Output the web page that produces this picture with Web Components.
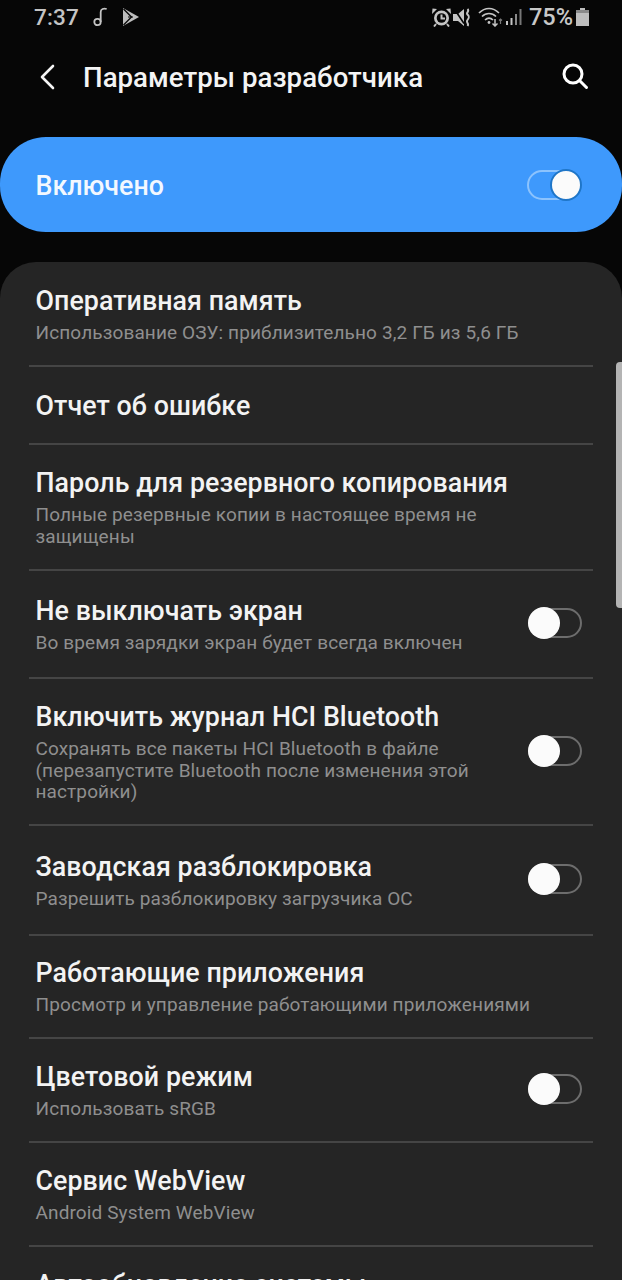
<!DOCTYPE html>
<html lang="ru"><head><meta charset="utf-8">
<style>
html,body{margin:0;padding:0;background:#060606;height:1280px;overflow:hidden}
body{font-family:Roboto,"Noto Sans",sans-serif}
</style></head><body>
<dev-status></dev-status>
<dev-appbar title="Параметры разработчика"></dev-appbar>
<dev-master label="Включено"></dev-master>
<dev-card>
<dev-row h="105" pt="24" title="Оперативная память" sub="Использование ОЗУ: приблизительно 3,2 ГБ из 5,6 ГБ"></dev-row>
<dev-row h="78" pt="24" title="Отчет об ошибке"></dev-row>
<dev-row h="126" pt="23" title="Пароль для резервного копирования" sub="Полные резервные копии в настоящее время не<br>защищены"></dev-row>
<dev-row h="108" pt="25" toggle title="Не выключать экран" sub="Во время зарядки экран будет всегда включен"></dev-row>
<dev-row h="147" pt="23" toggle title="Включить журнал HCI Bluetooth" sub="Сохранять все пакеты HCI Bluetooth в файле<br>(перезапустите Bluetooth после изменения этой<br>настройки)"></dev-row>
<dev-row h="110" pt="26" toggle title="Заводская разблокировка" sub="Разрешить разблокировку загрузчика ОС"></dev-row>
<dev-row h="103" pt="22" title="Работающие приложения" sub="Просмотр и управление работающими приложениями"></dev-row>
<dev-row h="104" pt="23" toggle title="Цветовой режим" sub="Использовать sRGB"></dev-row>
<dev-row h="104" pt="23" title="Сервис WebView" sub="Android System WebView"></dev-row>
<dev-row h="104" pt="23" last title="Автообновление системы"></dev-row>
</dev-card>
<dev-scrollbar></dev-scrollbar>
<script>
function def(name, css, html){
  customElements.define(name, class extends HTMLElement{
    constructor(){super();this.attachShadow({mode:'open'});}
    connectedCallback(){
      const a=n=>this.getAttribute(n);
      this.shadowRoot.innerHTML='<style>'+css+'</style>'+(typeof html==='function'?html(a,this):html);
    }
  });
}
def('dev-toggle',`
:host{display:block;width:54px;height:30px;position:relative;flex:none}
.track{position:absolute;left:0;right:0;top:0;bottom:0;box-sizing:border-box;border-radius:15px;border:2px solid #6d6d6d;}
.knob{position:absolute;top:-1px;left:0;width:32px;height:32px;box-sizing:border-box;border-radius:50%;background:#fbfbfb}
:host([on]) .track{border-color:#8cc3fd}
:host([on]) .knob{left:auto;right:-1px;border:2px solid #1f76c8;}
`,`<div class="track"></div><div class="knob"></div>`);

def('dev-status',`
:host{display:flex;align-items:center;height:34px;padding:0 33px 0 34px;color:#c4c4c4;font:500 22.5px/34px Roboto,sans-serif}
.time{letter-spacing:.2px}
svg{display:block;flex:none}
.sp{flex:1}
.pct{font-size:23.500px;margin-left:7px;color:#c8c8c8}
`,`<span class="time">7:37</span>
<svg style="margin-left:14px" width="16" height="20" viewBox="0 0 16 20" fill="none" stroke="#c4c4c4" stroke-width="1.800"><circle cx="4.500" cy="15" r="3.200"/><path d="M7.700 15V5c0-3 3-4 6-3"/></svg>
<svg style="margin-left:13px" width="17" height="18" viewBox="0 0 17 18"><path d="M1 0v18l16-9z" fill="#bdbdbd"/><path d="M1.500 1l8 8-8 8" fill="none" stroke="#060606" stroke-width="1.300"/><path d="M6 9h5" stroke="#060606" stroke-width="1"/></svg>
<span class="sp"></span>
<svg width="19" height="19" viewBox="0 0 19 19"><circle cx="9.500" cy="10" r="7.500" fill="#c4c4c4"/><circle cx="9.500" cy="10" r="4.800" fill="#060606"/><path d="M9.500 6.500V10.500H13" fill="none" stroke="#c4c4c4" stroke-width="2"/><path d="M0 6L5 1 0.500 0.500zM19 6L14 1 18.500 .5z" fill="#c4c4c4"/><path d="M4 16l-2 2.500M15 16l2 2.500" stroke="#c4c4c4" stroke-width="2"/></svg>
<svg style="margin-left:2px" width="18" height="19" viewBox="0 0 18 19"><path d="M0 6h5l6-5v17l-6-5H0z" fill="#c4c4c4"/><path d="M1 0.500l10 15" stroke="#060606" stroke-width="1.600"/><path d="M14.500 1c2.500 2.500-2 3.500 0 5.500s2 3 0 5.500 2 3.500 0 6" fill="none" stroke="#c4c4c4" stroke-width="2"/></svg>
<svg style="margin-left:7px" width="25" height="20" viewBox="0 0 25 20" fill="none" stroke="#c4c4c4" stroke-width="1.700"><path d="M1 6c6-6 14-6 20 0"/><path d="M4 9.500c4-4 10-4 14 0"/><path d="M7 13c2.500-2.500 5.500-2.500 8 0"/><circle cx="11" cy="15.500" r="1.400" fill="#c4c4c4" stroke="none"/><path d="M17 12v7M14.500 16.500l2.500 2.500 2.500-2.500" stroke-width="1.500"/><path d="M22.500 17v-5m-1.500 1.500l1.500-1.500 1.500 1.500" stroke="#777" stroke-width="1.200"/></svg>
<svg style="margin-left:3px" width="16" height="18" viewBox="0 0 16 18" fill="#c4c4c4"><rect x="0" y="13" width="2" height="4"/><rect x="4.500" y="10" width="2" height="7"/><rect x="9" y="6" width="2" height="11" fill="#8a8a8a"/><rect x="13.500" y="1" width="2" height="16" fill="#777"/></svg>
<span class="pct">75%</span>
<svg style="margin-left:3px" width="13" height="18" viewBox="0 0 13 18"><path d="M4 0h5v2h4v16H0V2h4z" fill="#bdbdbd"/><rect x="0" y="2" width="13" height="3" fill="#8a8a8a"/></svg>`);

def('dev-appbar',`
:host{display:flex;align-items:center;height:88px;padding:0 33px 0 38px;color:#f4f4f4;box-sizing:border-box}
h1{margin:0 0 0 27px;flex:1;font:500 27.600px/34px Roboto,sans-serif;white-space:nowrap;letter-spacing:.05px}
svg{display:block;flex:none}
.b{margin-top:-2px}.s{margin-top:-4px}
`,a=>`<svg class="b" width="18" height="26" viewBox="0 0 18 26" fill="none" stroke="#f4f4f4" stroke-width="2.600" stroke-linecap="round" stroke-linejoin="round"><path d="M15 2L4 13l11 11"/></svg>
<h1>${a('title')}</h1>
<svg class="s" width="28" height="28" viewBox="0 0 28 28" fill="none" stroke="#fff" stroke-width="3" stroke-linecap="round"><circle cx="12" cy="12" r="9"/><path d="M19 19l6.500 6.500"/></svg>`);

def('dev-master',`
:host{display:flex;align-items:center;justify-content:space-between;box-sizing:border-box;height:95px;margin-top:15px;padding:0 41px 0 35.500px;border-radius:46px;background:#3e99fc;color:#f3f8ff;font:500 26.800px/34px Roboto,sans-serif}
span{padding-top:2px}
`,a=>`<span>${a('label')}</span><dev-toggle on></dev-toggle>`);

def('dev-card',`
:host{display:block;margin-top:30px;background:#252525;border-radius:36px 36px 0 0;height:1100px;overflow:hidden}
`,`<slot></slot>`);

def('dev-row',`
:host{display:block;box-sizing:border-box;margin:0 29px;padding-left:6.500px;position:relative;border-bottom:2px solid #454545}
:host([last]){border-bottom:0}
.t{font:500 26.800px/30px Roboto,sans-serif;color:#f3f3f3;white-space:nowrap;letter-spacing:.06px}
.s{font:400 19px/21.500px Roboto,sans-serif;color:#8f8f8f;margin-top:6px;white-space:nowrap;letter-spacing:.12px}
.tg{position:absolute;right:11px;top:0;bottom:2px;display:flex;align-items:center}
`,(a,el)=>{
  el.style.height=a('h')+'px';
  el.style.paddingTop=a('pt')+'px';
  return `<div class="t">${a('title')}</div>`+(a('sub')?`<div class="s">${a('sub')}</div>`:'')+(el.hasAttribute('toggle')?`<div class="tg"><dev-toggle></dev-toggle></div>`:'');
});

def('dev-scrollbar',`
:host{display:block;position:absolute;left:616px;top:362px;width:6px;height:246px;background:#b4b4b4;border-radius:4px 0 0 4px}
`,``);
</script>
</body></html>
